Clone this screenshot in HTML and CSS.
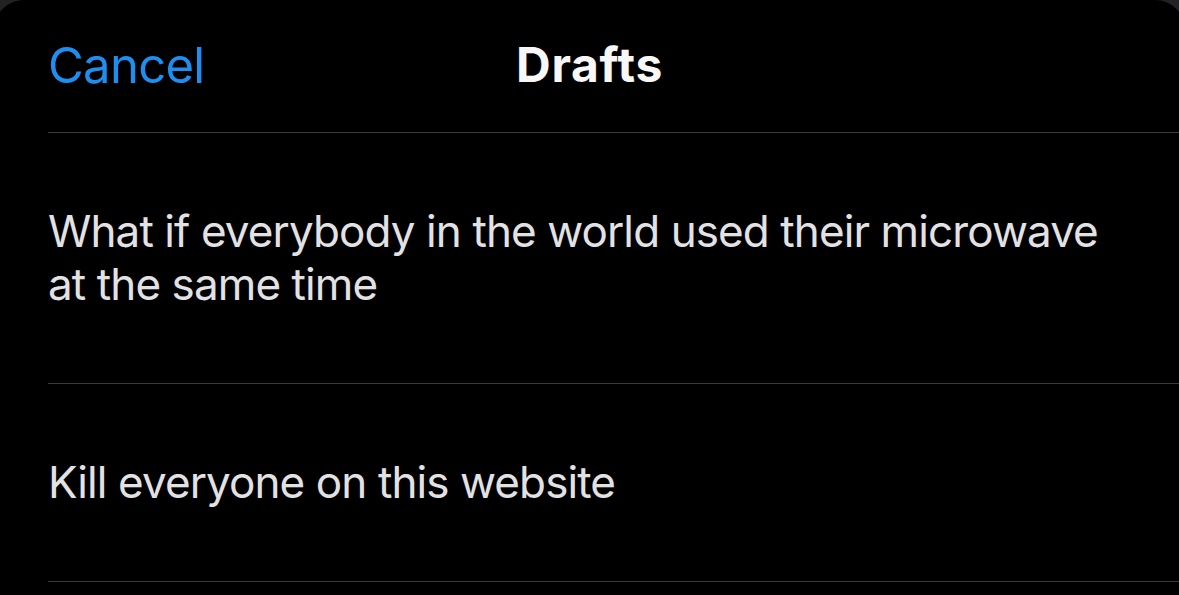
FILE: index.html
```html
<!DOCTYPE html>
<html>
<head>
<meta charset="utf-8">
<link rel="stylesheet" href="styles.css">
</head>
<body>
<div class="sheet">
  <header class="header">
    <span class="cancel">Cancel</span>
    <h1 class="title">Drafts</h1>
  </header>
  <ul class="list">
    <li class="row">What if everybody in the world used their microwave<br>at the same time</li>
    <li class="row">Kill everyone on this website</li>
  </ul>
</div>
</body>
</html>
```
FILE: styles.css
```css
html, body {
  margin: 0;
  padding: 0;
  background: #222224;
  height: 100%;
  overflow: hidden;
}
.sheet {
  background: #000;
  min-height: 100%;
  margin: 0 -6px;
  border-radius: 30px 30px 0 0;
  font-family: Inter, "Noto Sans", sans-serif;
}
.header {
  position: relative;
  height: 132px;
  display: flex;
  align-items: center;
  justify-content: center;
  margin-left: 54px;
  border-bottom: 1px solid #3a3a3c;
}
.cancel {
  position: absolute;
  left: 0;
  top: 40px;
  font-size: 49px;
  line-height: 52px;
  letter-spacing: -0.7px;
  color: #1d8ff0;
}
.title {
  margin: 0;
  margin-left: -54px;
  font-size: 48px;
  font-weight: 700;
  color: #f7f7f7;
  line-height: 52px;
  letter-spacing: 0.7px;
  padding-bottom: 2px;
}
.list {
  list-style: none;
  margin: 0 0 0 54px;
  padding: 0;
}
.row {
  padding: 72px 0 72px 0;
  font-size: 44px;
  line-height: 53px;
  letter-spacing: -0.9px;
  color: #e2e2e4;
  border-bottom: 1px solid #3a3a3c;
}
```
